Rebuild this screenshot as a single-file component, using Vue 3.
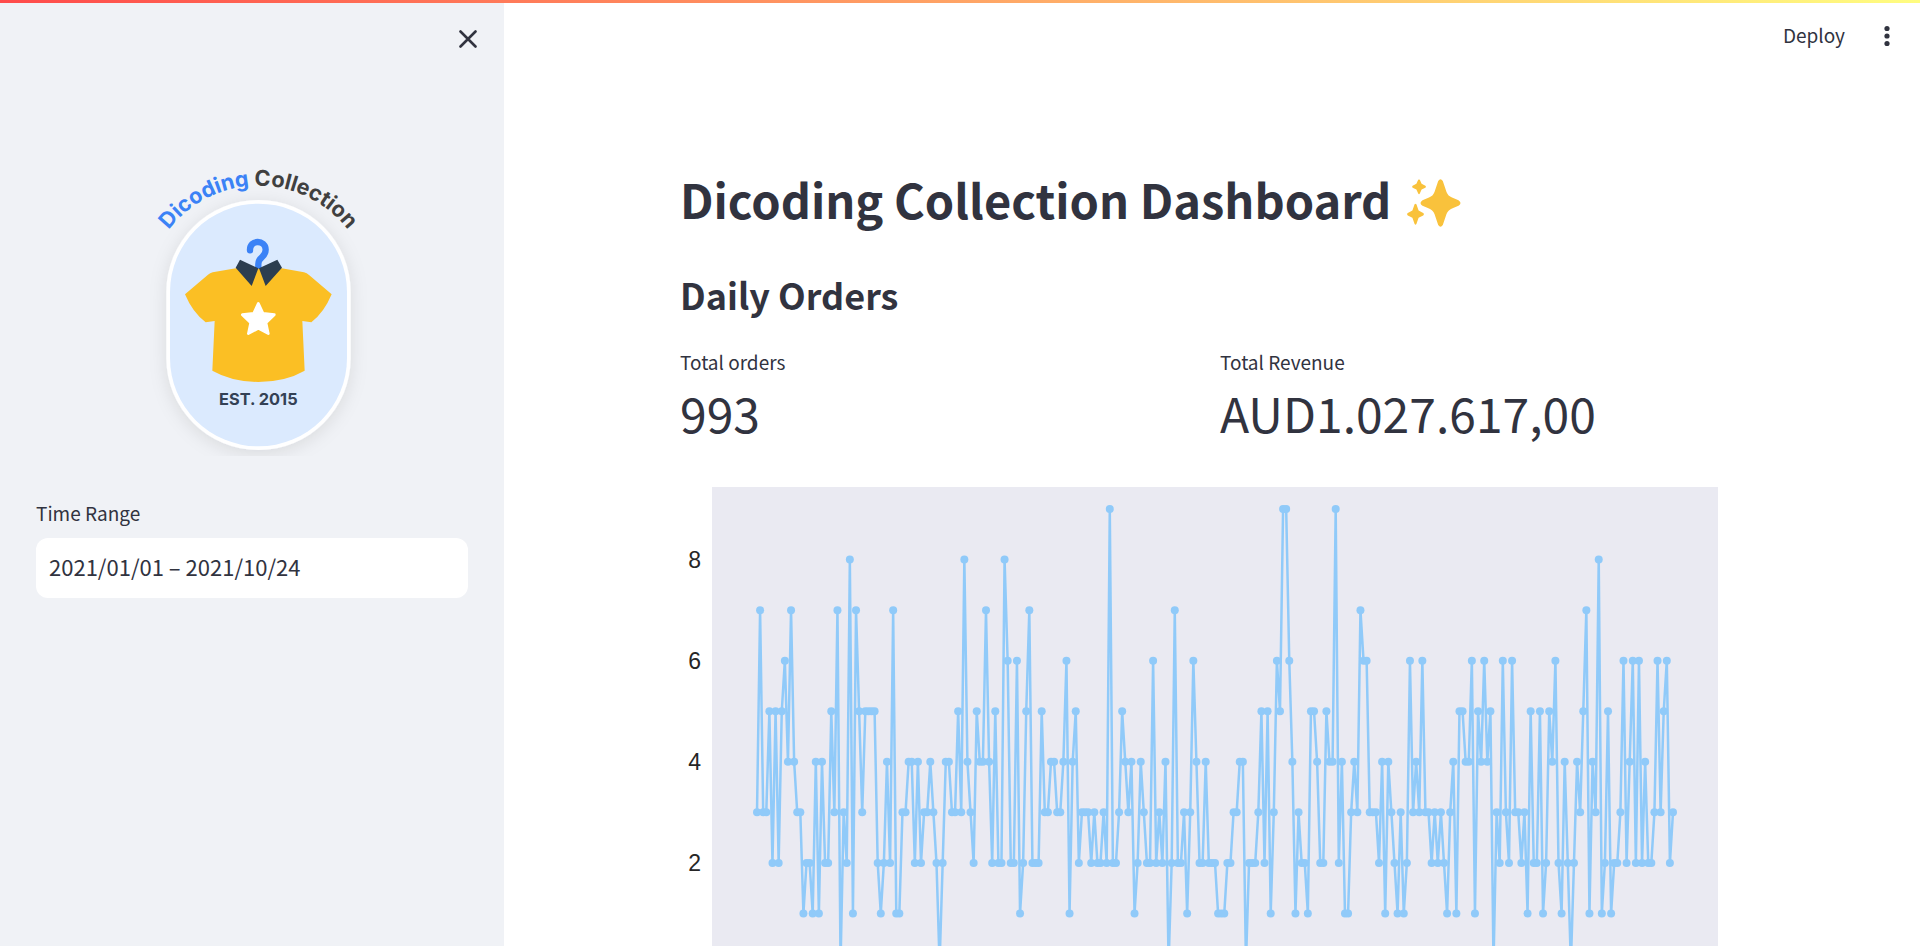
<script setup>
import { ref } from 'vue'

const range = ref('2021/01/01 – 2021/10/24')

// Orders per day, 1 January to 24 October
const orders = [
  3, 7, 3, 3, 5, 2, 5, 2, 5, 6, 4, 7, 4, 3, 3, 1, 2, 2, 1, 4,
  1, 4, 2, 2, 5, 3, 7, 0, 3, 2, 8, 1, 7, 5, 3, 5, 5, 5, 5, 2,
  1, 2, 4, 2, 7, 1, 1, 3, 3, 4, 4, 2, 4, 2, 3, 3, 4, 3, 2, 0,
  2, 4, 4, 3, 3, 5, 3, 8, 4, 3, 2, 5, 4, 4, 7, 4, 2, 5, 2, 2,
  8, 6, 2, 2, 6, 1, 2, 5, 7, 2, 2, 2, 5, 3, 3, 4, 4, 3, 3, 4,
  6, 1, 4, 5, 2, 3, 3, 3, 2, 3, 2, 2, 3, 2, 9, 2, 2, 3, 5, 4,
  3, 4, 1, 2, 4, 3, 2, 2, 6, 2, 3, 2, 4, 0, 2, 7, 2, 2, 3, 1,
  3, 6, 4, 2, 2, 4, 2, 2, 2, 1, 1, 1, 2, 2, 3, 3, 4, 4, 0, 2,
  2, 2, 3, 5, 2, 5, 1, 3, 6, 5, 9, 9, 6, 4, 1, 3, 2, 2, 1, 5,
  5, 4, 2, 2, 5, 4, 4, 9, 2, 4, 1, 1, 3, 4, 3, 7, 6, 6, 3, 3,
  3, 2, 4, 1, 4, 3, 2, 1, 3, 1, 2, 6, 3, 4, 3, 6, 3, 3, 2, 3,
  2, 3, 2, 1, 3, 4, 1, 5, 5, 4, 4, 6, 1, 5, 4, 6, 4, 5, 0, 3,
  2, 6, 3, 2, 6, 3, 3, 2, 3, 1, 5, 2, 2, 5, 1, 2, 5, 4, 6, 2,
  1, 4, 2, 0, 2, 4, 3, 5, 7, 1, 4, 3, 8, 1, 2, 5, 1, 2, 2, 3,
  6, 2, 4, 6, 2, 6, 2, 4, 2, 2, 3, 6, 3, 5, 6, 2, 3,
]

const first = 77
const span = 916
const zeroY = 477
const unit = 50.55
const yOf = (value) => zeroY - value * unit
const points = orders.map((value, day) => ({
  x: first + (day * span) / (orders.length - 1),
  y: yOf(value),
}))
const line = points.map((p) => `${p.x.toFixed(2)},${p.y.toFixed(2)}`).join(' ')
const ticks = [8, 6, 4, 2]
</script>

<template>
  <div class="app">
    <div class="decoration"></div>
    <aside class="sidebar">
      <div class="sidebar-head">
        <button class="icon-button" type="button" aria-label="Close sidebar">
          <svg width="18" height="18" viewBox="0 0 18 18" aria-hidden="true">
            <path d="M1.5 1.5 16.5 16.5M16.5 1.5 1.5 16.5" fill="none" stroke="#31333f" stroke-width="2.6" stroke-linecap="round" />
          </svg>
        </button>
      </div>
      <svg class="logo" viewBox="-312 0 1296 960" role="img" aria-label="Dicoding Collection, est. 2015">
        <defs>
          <path id="logo-arc" d="M17 445A338 338 0 0 1 693 445" />
          <filter id="logo-shadow" filterUnits="userSpaceOnUse" x="-40" y="60" width="800" height="857">
            <feDropShadow dx="0" dy="10" stdDeviation="26" flood-color="#000" flood-opacity="0.1" />
          </filter>
        </defs>
        <rect x="79" y="150" width="553" height="750" rx="276" fill="#fff" filter="url(#logo-shadow)" />
        <rect x="90" y="161" width="531" height="728" rx="265" fill="#dbeafe" />
        <text class="logo-name" text-anchor="middle">
          <textPath href="#logo-arc" startOffset="50%"><tspan fill="#3b82f6">Dicoding</tspan><tspan fill="#404040"> Collection</tspan></textPath>
        </text>
        <path d="M330 301C328 268 377 268 377 299C377 325 355 318 355 342V356" fill="none" stroke="#3b82f6" stroke-width="19" stroke-linecap="round" />
        <path d="M288 355 218 367Q210 369 204 374L135 433Q158 488 197 517L224 513 217 662Q275 695 355 696Q437 695 494 662L487 513 514 517Q552 488 575 433L508 376Q500 369 492 367L425 355 357 356Z" fill="#fbbf24" />
        <path d="M300 329 355 355 335 408 287 353ZM412 329 426 353 377 408 357 355Z" fill="#2c3e50" />
        <path d="M355 460 369 490 403 494 378 518 385 551 355 535 325 551 332 518 307 494 341 490Z" fill="#fff" stroke="#fff" stroke-width="8" stroke-linejoin="round" />
        <text class="logo-year" x="355" y="765" text-anchor="middle">EST. 2015</text>
      </svg>
      <div class="field">
        <label for="time-range">Time Range</label>
        <input id="time-range" v-model="range" type="text" />
      </div>
    </aside>

    <div class="view">
      <header class="toolbar">
        <button class="deploy" type="button">Deploy</button>
        <button class="icon-button" type="button" aria-label="Main menu">
          <svg width="24" height="24" viewBox="0 0 24 24" fill="#31333f" aria-hidden="true">
            <circle cx="12" cy="4.5" r="2.6" />
            <circle cx="12" cy="12" r="2.6" />
            <circle cx="12" cy="19.5" r="2.6" />
          </svg>
        </button>
      </header>
      <main class="content">
        <h1>
          Dicoding Collection Dashboard
          <svg width="54" height="56" viewBox="0 -8 54 56" fill="#f9c23c" role="img" aria-label="sparkles">
            <path d="M31.2 2.1Q33.5-1.4 35.8 2.1L39.5 13Q41 17 45 18.5L51.5 21.2Q55.5 24 51.5 26.8L45 29.5Q41 31 39.5 35L35.8 45.9Q33.5 49.4 31.2 45.9L27.5 35Q26 31 22 29.5L15.5 26.8Q11.5 24 15.5 21.2L22 18.5Q26 17 27.5 13Z" />
            <path d="M11.2.8Q12 0 12.8.8L14.6 4.7 18.4 6.8Q19.6 7.8 18.4 8.8L14.6 10.5 12.8 14.5Q12 15.8 11.2 14.5L9.4 10.5 5.6 8.8Q4.6 7.8 5.6 6.8L9.4 4.7Z" />
            <path d="M7.6 25.3Q8.5 24 9.4 25.3L11.6 31.5 16.2 34Q17.6 35.2 16.2 36.4L11.6 38.8 9.4 45Q8.5 46.4 7.6 45L5.4 38.8.8 36.4Q-.6 35.2.8 34L5.4 31.5Z" />
          </svg>
        </h1>
        <h2>Daily Orders</h2>
        <div class="metrics">
          <div class="metric">
            <div class="metric-label">Total orders</div>
            <div class="metric-value">993</div>
          </div>
          <div class="metric">
            <div class="metric-label">Total Revenue</div>
            <div class="metric-value">AUD1.027.617,00</div>
          </div>
        </div>
        <svg class="chart" viewBox="0 0 1056 540" role="img" aria-label="Daily orders line chart">
          <rect x="32" y="0" width="1006" height="500" fill="#eaeaf2" />
          <text v-for="tick in ticks" :key="tick" class="tick" x="21" :y="yOf(tick) + 8" text-anchor="end">{{ tick }}</text>
          <polyline :points="line" fill="none" stroke="#90caf9" stroke-width="2.5" stroke-linejoin="round" />
          <circle v-for="(p, day) in points" :key="day" :cx="p.x" :cy="p.y" r="4" fill="#90caf9" />
        </svg>
      </main>
    </div>
  </div>
</template>

<style>
body {
  margin: 0;
  overflow: hidden;
}
</style>

<style scoped>
.app {
  position: relative;
  display: flex;
  height: 100vh;
  overflow: hidden;
  background: #fff;
  color: #31333f;
  font-family: "Noto Sans CJK SC", "Noto Sans", sans-serif;
}
.decoration {
  position: absolute;
  inset: 0 0 auto;
  height: 3px;
  background: linear-gradient(90deg, #ff4b4b, #fffd80);
}
.sidebar {
  box-sizing: border-box;
  flex: 0 0 504px;
  padding: 0 36px;
  background: #f0f2f6;
}
.sidebar-head {
  display: flex;
  justify-content: flex-end;
  height: 150px;
  margin-right: -12px;
  padding-top: 27px;
  box-sizing: border-box;
}
button {
  border: 0;
  padding: 0;
  background: none;
  color: inherit;
  font: inherit;
  cursor: pointer;
}
.icon-button {
  display: flex;
  align-items: center;
  justify-content: center;
  width: 24px;
  height: 24px;
}
.logo {
  display: block;
  width: 100%;
}
.logo-name {
  font: 700 65px Inter, sans-serif;
}
.logo-year {
  font: 700 49px Inter, sans-serif;
  fill: #334155;
}
.field {
  display: flex;
  flex-direction: column;
  gap: 10px;
  padding-top: 28px;
}
.field label {
  font-size: 19px;
  line-height: 30px;
}
.field input {
  box-sizing: border-box;
  width: 100%;
  height: 60px;
  padding: 0 13px 4px;
  border: 0;
  border-radius: 12px;
  background: #fff;
  color: inherit;
  font: inherit;
  font-size: 22px;
}
.view {
  flex: 1;
  min-width: 0;
}
.toolbar {
  display: flex;
  align-items: center;
  justify-content: flex-end;
  gap: 30px;
  height: 72px;
  padding-right: 21px;
}
.deploy {
  padding-bottom: 2px;
  font-size: 19px;
  line-height: 30px;
}
.content {
  max-width: 1056px;
  margin: 0 auto;
  padding: 95px 8px 0 0;
}
h1,
h2 {
  margin: 0;
  font-weight: 600;
}
h1 {
  display: flex;
  align-items: center;
  gap: 16px;
  font-size: 47px;
  line-height: 64px;
}
h2 {
  margin-top: 38px;
  font-size: 36px;
  line-height: 50px;
}
.metrics {
  display: grid;
  grid-template-columns: 1fr 1fr;
  gap: 24px;
  margin-top: 28px;
}
.metric-label {
  font-size: 19px;
  line-height: 30px;
}
.metric-value {
  font-size: 48px;
  line-height: 70px;
}
.chart {
  display: block;
  width: 100%;
  margin-top: 40px;
}
.tick {
  font: 23px "Liberation Sans", Arial, sans-serif;
  fill: #262626;
}
</style>
